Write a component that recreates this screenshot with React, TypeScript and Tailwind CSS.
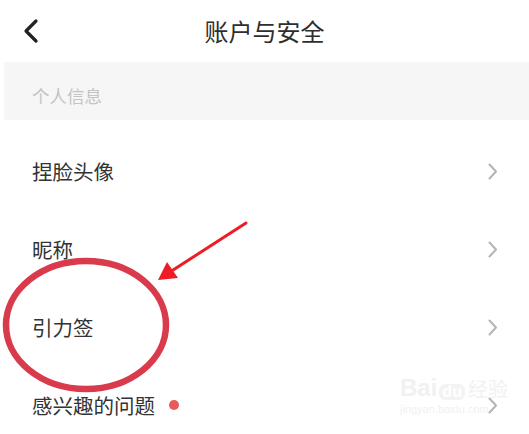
import React from "react";

const Chevron = () => (
  <svg width="10" height="17" viewBox="0 0 10 17" className="shrink-0">
    <path d="M1.5 1.5 L8 8.5 L1.5 15.5" fill="none" stroke="#b4b4b4" strokeWidth="2" strokeLinecap="round" strokeLinejoin="round" />
  </svg>
);

const Row = ({ label, dot }: { label: string; dot?: boolean }) => (
  <div className="flex h-[78px] items-center justify-between pl-8 pr-[31px]">
    <div className="flex items-center">
      <span className="text-[20.5px] text-[#333333]">{label}</span>
      {dot && <span className="ml-[14px] h-[10px] w-[10px] rounded-full bg-[#e65a5c]" />}
    </div>
    <Chevron />
  </div>
);

export default function App() {
  return (
    <div
      className="relative h-[434px] w-[529px] overflow-hidden bg-white"
      style={{ fontFamily: '"Noto Sans CJK SC", "Noto Sans", sans-serif' }}
    >
      <div className="relative flex h-[62px] items-center justify-center">
        <svg width="18" height="26" viewBox="0 0 18 26" className="absolute left-[22px] top-[18px]">
          <path d="M14 3 L4 13 L14 23" fill="none" stroke="#222222" strokeWidth="3.2" strokeLinecap="round" strokeLinejoin="round" />
        </svg>
        <span className="text-[24px] text-[#2e2e2e]">账户与安全</span>
      </div>
      <div className="ml-1 flex h-[58px] items-center bg-[#f6f6f6] pl-7 pt-[10px]">
        <span className="text-[17.5px] text-[#c4c4c4]">个人信息</span>
      </div>
      <div className="mt-3">
        <Row label="捏脸头像" />
        <Row label="昵称" />
        <Row label="引力签" />
        <Row label="感兴趣的问题" dot />
      </div>

      {/* watermark */}
      <div className="pointer-events-none absolute left-[400px] top-[376px] flex flex-col items-start leading-none" style={{ fontFamily: '"Liberation Sans", "Noto Sans CJK SC", sans-serif' }}>
        <div className="flex items-end">
          <span className="text-[24px] font-bold text-[#f1f1f1]">Bai</span>
          <span className="ml-[2px] rounded-[6px] bg-[#f3f3f3] px-[3px] text-[16px] font-bold text-white">du</span>
          <span className="ml-[3px] text-[20px] text-[#f1f1f1]">经验</span>
        </div>
        <span className="mt-[4px] text-[11px] text-[#f1f1f1]">jingyan.baidu.com</span>
      </div>

      {/* annotations */}
      <svg className="pointer-events-none absolute left-0 top-0" width="529" height="434" viewBox="0 0 529 434">
        <ellipse cx="86" cy="325" rx="80" ry="64" fill="none" stroke="#d93a4c" strokeWidth="6.5" />
        <line x1="246" y1="223" x2="170" y2="272" stroke="#ee1c24" strokeWidth="3" strokeLinecap="round" />
        <polygon points="158,280 167,262 178,278" fill="#ee1c24" />
      </svg>
    </div>
  );
}
